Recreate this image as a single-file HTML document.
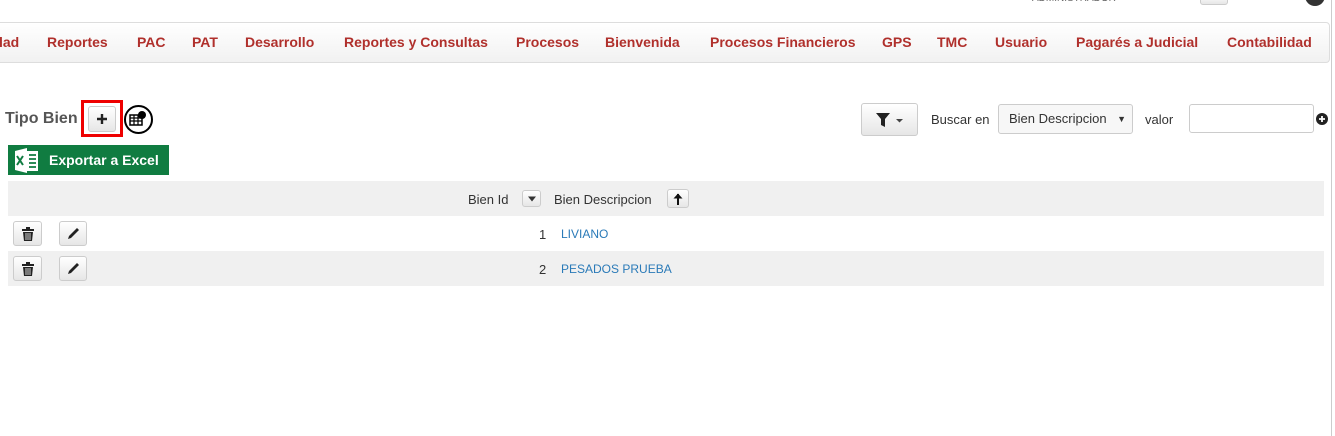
<!DOCTYPE html>
<html><head><meta charset="utf-8"><style>
body{margin:0;width:1335px;height:436px;background:#fff;font-family:"Liberation Sans","DejaVu Sans",sans-serif;position:relative;overflow:hidden}
.a{position:absolute}
.nav{left:-5px;top:22px;width:1333px;height:39px;border:1px solid #ddd;border-radius:4px;background:linear-gradient(#fff,#f1f1f1)}
.ni{position:absolute;top:34px;font-size:14px;font-weight:bold;color:#b0302c;white-space:nowrap}
.btn{position:absolute;border:1px solid #ccc;border-radius:3px;background:linear-gradient(#fff,#e6e6e6);box-sizing:border-box}
.t{font-size:13px;color:#333}
.btn svg{position:absolute;left:50%;top:50%;transform:translate(-50%,-50%)}
</style></head><body>
<div class="a" style="left:1032px;top:-7px;font-size:10px;color:#666">ADMINISTRADOR</div>
<div class="btn" style="left:1200px;top:-6px;width:28px;height:11px"></div>
<div class="a" style="left:1305px;top:-14px;width:20px;height:20px;border-radius:50%;background:#333"></div>
<div class="a" style="left:1331px;top:0;width:1px;height:436px;background:#ccc"></div>
<div class="a nav"></div>
<span class="ni" style="left:-1px">lad</span>
<span class="ni" style="left:47px">Reportes</span>
<span class="ni" style="left:137px">PAC</span>
<span class="ni" style="left:192px">PAT</span>
<span class="ni" style="left:245px">Desarrollo</span>
<span class="ni" style="left:344px">Reportes y Consultas</span>
<span class="ni" style="left:516px">Procesos</span>
<span class="ni" style="left:605px">Bienvenida</span>
<span class="ni" style="left:710px">Procesos Financieros</span>
<span class="ni" style="left:882px">GPS</span>
<span class="ni" style="left:937px">TMC</span>
<span class="ni" style="left:995px">Usuario</span>
<span class="ni" style="left:1076px">Pagarés a Judicial</span>
<span class="ni" style="left:1227px">Contabilidad</span>

<div class="a" style="left:5px;top:110px;font-size:16px;font-weight:bold;color:#555">Tipo Bien</div>
<div class="a" style="left:81px;top:100px;width:42px;height:37px;border:3px solid #e00;box-sizing:border-box"></div>
<div class="btn" style="left:88px;top:106px;width:28px;height:26px"><svg width="12" height="12" viewBox="0 0 12 12"><path d="M6 1v10M1 6h10" stroke="#222" stroke-width="2.4"/></svg></div>
<div class="a" style="left:124px;top:105px;width:29px;height:29px;border:2px solid #000;border-radius:50%;box-sizing:border-box">
<svg width="25" height="25" viewBox="0 0 25 25" style="position:absolute;left:0;top:0"><rect x="4" y="8" width="12" height="10" fill="none" stroke="#000" stroke-width="1.5"/><path d="M4 11h12M4 14h12M8 8v10M12 8v10" stroke="#000" stroke-width="1.2"/><circle cx="16" cy="8" r="4" fill="#000"/></svg></div>
<div class="a" style="left:8px;top:145px;width:161px;height:30px;background:#107c41"></div>
<svg class="a" style="left:13px;top:147px" width="28" height="27" viewBox="0 0 28 27"><rect x="10" y="4" width="15" height="20" fill="#fff"/><path d="M16 8h7M16 12h7M16 16h7M16 20h7" stroke="#107c41" stroke-width="1.8"/><path d="M2 4l12-3v25L2 23z" fill="#fff"/><path d="M4 9l6 9M10 9l-6 9" stroke="#107c41" stroke-width="2"/></svg>
<div class="a" style="left:49px;top:152px;color:#fff;font-weight:bold;font-size:14px">Exportar a Excel</div>

<div class="btn" style="left:861px;top:103px;width:57px;height:33px"><svg width="30" height="16" viewBox="0 0 30 16"><path d="M1 1h14l-5 6v8l-4-2V7z" fill="#222"/><path d="M21 7h7l-3.5 3.5z" fill="#444"/></svg></div>
<div class="a t" style="left:931px;top:112px">Buscar en</div>
<div class="a" style="left:998px;top:104px;width:135px;height:30px;border:1px solid #ccc;border-radius:3px;background:#f7f7f7;box-sizing:border-box;font-size:13px;color:#333;line-height:28px;padding-left:10px">Bien Descripcion<span style="position:absolute;right:6px;font-size:9px">▼</span></div>
<div class="a t" style="left:1145px;top:112px">valor</div>
<div class="a" style="left:1189px;top:104px;width:125px;height:29px;border:1px solid #ccc;border-radius:3px;box-sizing:border-box"></div>
<div class="a" style="left:1316px;top:113px;width:12px;height:12px;border-radius:50%;background:#222"><svg width="12" height="12" viewBox="0 0 12 12" style="position:absolute"><path d="M6 3v6M3 6h6" stroke="#fff" stroke-width="1.8"/></svg></div>

<div class="a" style="left:8px;top:181px;width:1316px;height:35px;background:#f0f0f0"></div>
<div class="a t" style="left:468px;top:192px">Bien Id</div>
<div class="btn" style="left:522px;top:190px;width:19px;height:17px"><svg width="8" height="5" viewBox="0 0 8 5"><path d="M0 0h8L4 5z" fill="#333"/></svg></div>
<div class="a t" style="left:554px;top:192px">Bien Descripcion</div>
<div class="btn" style="left:667px;top:189px;width:22px;height:19px"><svg width="10" height="12" viewBox="0 0 10 12"><path d="M5 1v11" stroke="#111" stroke-width="2"/><path d="M0.5 5.5L5 0.5 9.5 5.5z" fill="#111"/></svg></div>

<div class="a" style="left:8px;top:251px;width:1316px;height:35px;background:#f0f0f0"></div>
<div class="btn" style="left:13px;top:221px;width:29px;height:25px"><svg width="12" height="14" viewBox="0 0 12 14"><path d="M4 0h4v2H4zM0 2h12v2H0z" fill="#222"/><path d="M1 5h10l-1 9H2z" fill="#222"/><path d="M4 6v7M6 6v7M8 6v7" stroke="#fff" stroke-width="0.8"/></svg></div>
<div class="btn" style="left:59px;top:221px;width:28px;height:25px"><svg width="14" height="14" viewBox="0 0 14 14"><path d="M11 1l2 2-8 8-3 1 1-3z" fill="#222"/></svg></div>
<div class="a t" style="left:539px;top:227px">1</div>
<div class="a" style="left:561px;top:227px;font-size:12px;color:#2a7ab8">LIVIANO</div>
<div class="btn" style="left:13px;top:256px;width:29px;height:25px"><svg width="12" height="14" viewBox="0 0 12 14"><path d="M4 0h4v2H4zM0 2h12v2H0z" fill="#222"/><path d="M1 5h10l-1 9H2z" fill="#222"/><path d="M4 6v7M6 6v7M8 6v7" stroke="#fff" stroke-width="0.8"/></svg></div>
<div class="btn" style="left:59px;top:256px;width:28px;height:25px"><svg width="14" height="14" viewBox="0 0 14 14"><path d="M11 1l2 2-8 8-3 1 1-3z" fill="#222"/></svg></div>
<div class="a t" style="left:539px;top:262px">2</div>
<div class="a" style="left:561px;top:262px;font-size:12px;color:#2a7ab8">PESADOS PRUEBA</div>
</body></html>
